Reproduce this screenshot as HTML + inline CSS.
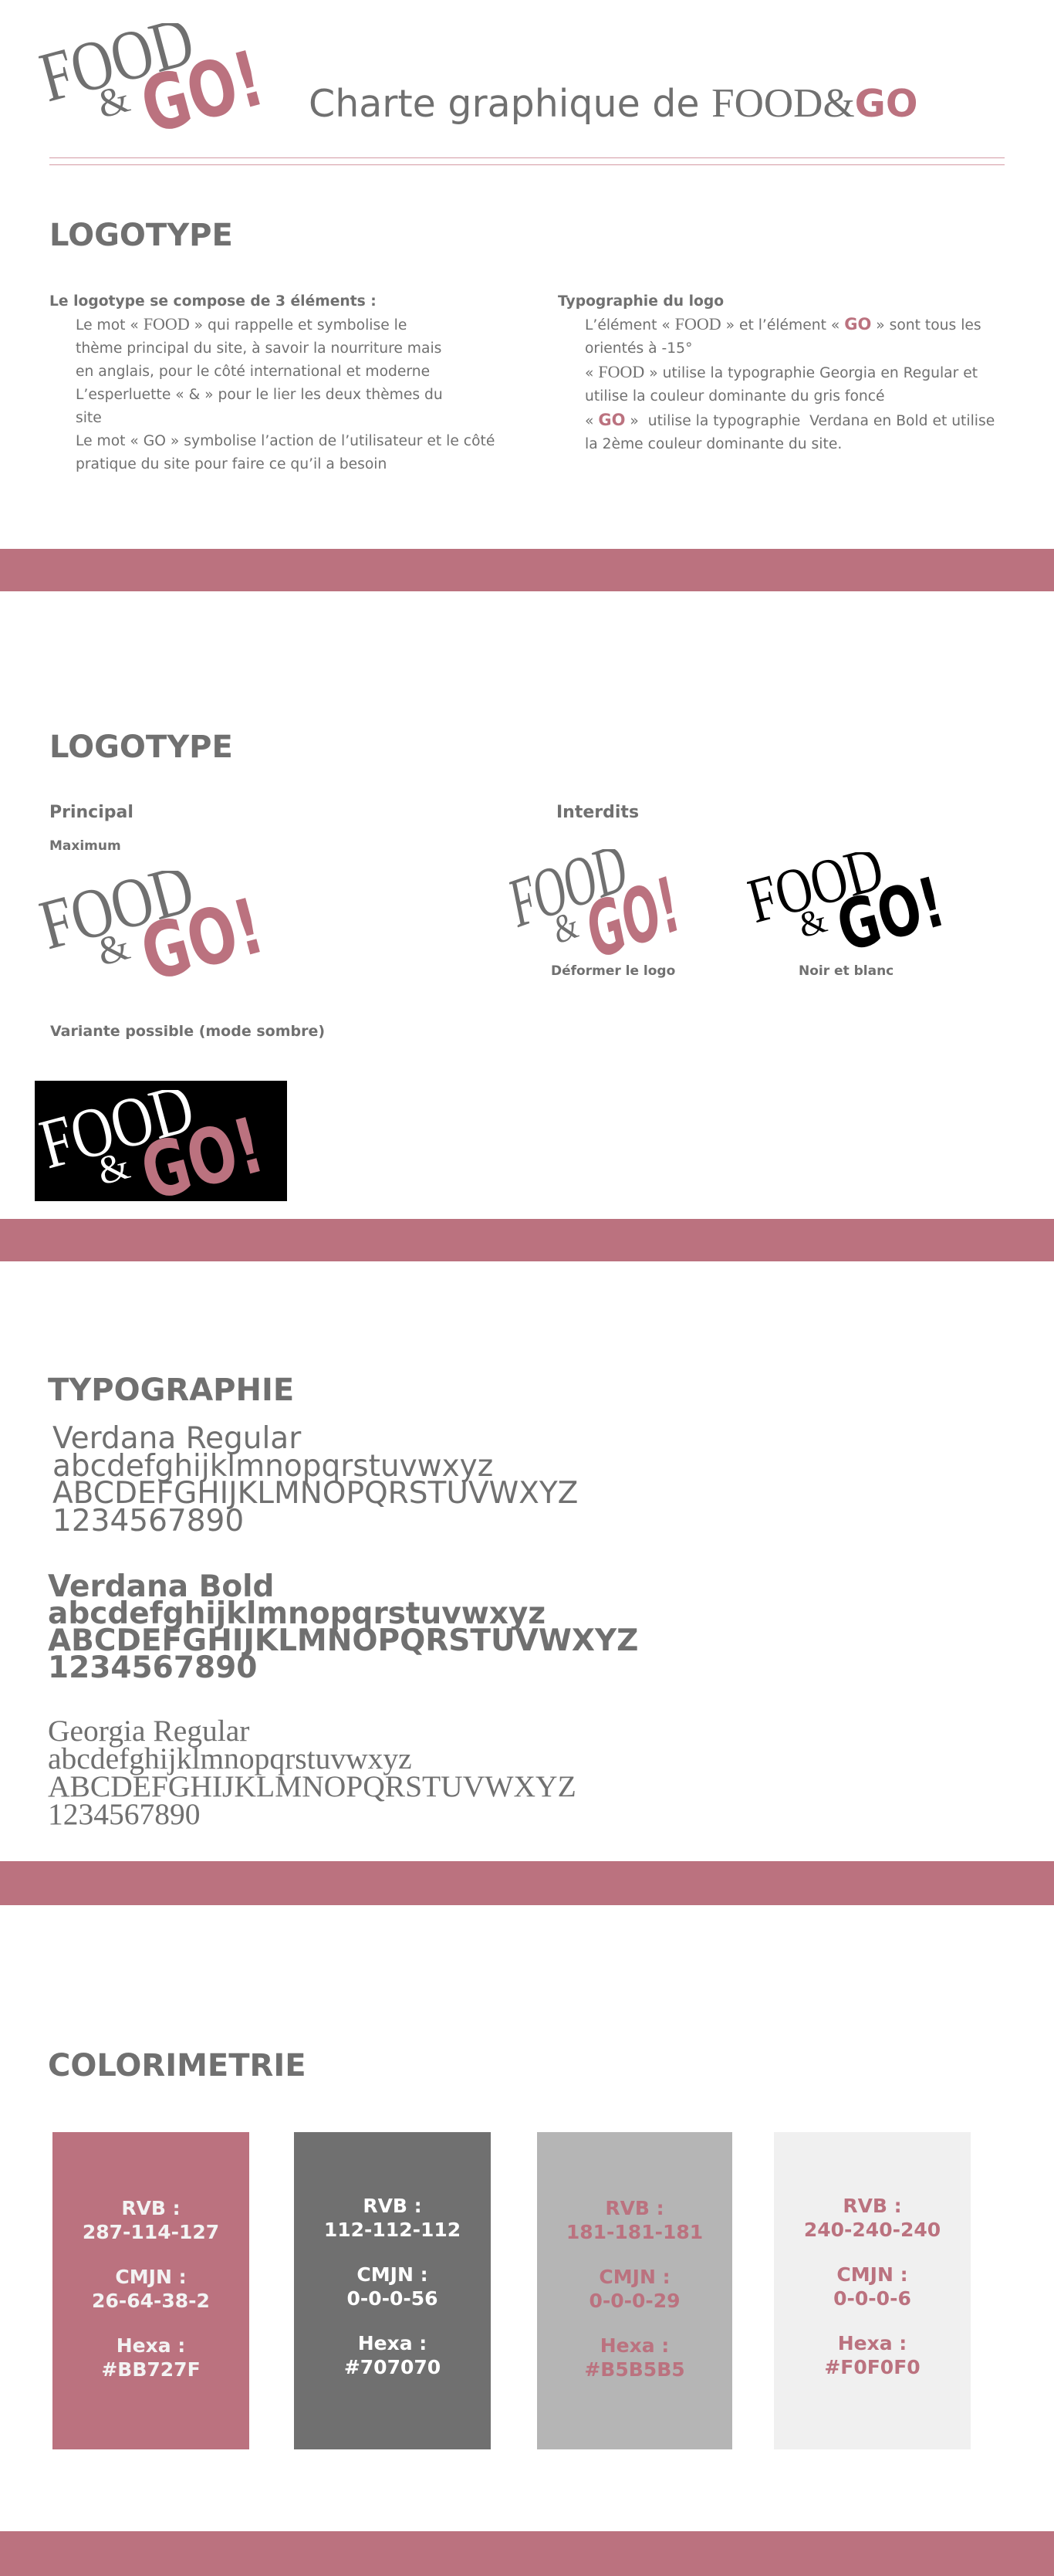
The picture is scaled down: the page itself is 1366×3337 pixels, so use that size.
<!DOCTYPE html>
<html><head><meta charset="utf-8">
<style>
*{margin:0;padding:0;box-sizing:border-box}
body{width:1366px;height:3337px;position:relative;background:#fff;font-family:"DejaVu Sans","Liberation Sans",sans-serif;color:#707070;overflow:hidden}
.a{position:absolute;white-space:nowrap}
.band{position:absolute;left:0;width:1366px;background:#BB727F}
.h{font-weight:bold;font-size:40px;line-height:1}
.t{font-size:18.7px;line-height:30px}
.sf{font-family:"Liberation Serif",serif;font-size:22px}
.go{color:#BB727F;font-weight:bold;font-size:21px}
.box{position:absolute;top:2762px;height:411px;font-weight:bold;font-size:25px;line-height:31px;text-align:center;padding-top:83px}
.box p{margin-bottom:27px}
</style></head><body>

<svg class="a" style="left:50px;top:30px" width="330" height="150" viewBox="0 0 330 150">
<text transform="translate(12 102) rotate(-15) scale(0.9 1.12)" font-family="Liberation Serif,serif" font-size="82" fill="#707070">FOOD</text>
<text x="82" y="123" transform="rotate(-15 82 123)" font-family="Liberation Serif,serif" font-size="52" fill="#707070">&amp;</text>
<text transform="translate(145 143) rotate(-15) scale(0.88 1.18)" font-family="DejaVu Sans,sans-serif" font-weight="bold" font-size="84" fill="#BB727F">GO!</text>
</svg>

<div class="a" style="left:400px;top:104px;font-size:49px;line-height:60px">Charte graphique de <span style="font-family:'Liberation Serif',serif;font-size:53px">FOOD&amp;</span><span style="color:#BB727F;font-weight:bold">GO</span></div>

<div class="a" style="left:64px;top:204px;width:1238px;height:1px;background:#d49aa4"></div>
<div class="a" style="left:64px;top:213px;width:1238px;height:1px;background:#d49aa4"></div>

<div class="a h" style="left:64px;top:285px">LOGOTYPE</div>

<div class="a t" style="left:64px;top:376px;font-weight:bold">Le logotype se compose de 3 éléments :</div>
<div class="a t" style="left:98px;top:405px">
Le mot « <span class="sf">FOOD</span> » qui rappelle et symbolise le<br>
thème principal du site, à savoir la nourriture mais<br>
en anglais, pour le côté international et moderne<br>
L’esperluette « &amp; » pour le lier les deux thèmes du<br>
site<br>
Le mot « GO » symbolise l’action de l’utilisateur et le côté<br>
pratique du site pour faire ce qu’il a besoin</div>

<div class="a t" style="left:723px;top:376px;font-weight:bold">Typographie du logo</div>
<div class="a t" style="left:758px;top:405px">
L’élément « <span class="sf">FOOD</span> » et l’élément « <span class="go">GO</span> » sont tous les<br>
orientés à -15°<br>
« <span class="sf">FOOD</span> » utilise la typographie Georgia en Regular et<br>
utilise la couleur dominante du gris foncé<br>
« <span class="go">GO</span> »&nbsp; utilise la typographie&nbsp; Verdana en Bold et utilise<br>
la 2ème couleur dominante du site.</div>

<div class="band" style="top:711px;height:55px"></div>

<div class="a h" style="left:64px;top:948px">LOGOTYPE</div>
<div class="a" style="left:64px;top:1040px;font-size:22px;font-weight:bold">Principal</div>
<div class="a" style="left:721px;top:1040px;font-size:22px;font-weight:bold">Interdits</div>
<div class="a" style="left:64px;top:1086px;font-size:17px;font-weight:bold">Maximum</div>

<svg class="a" style="left:50px;top:1128px" width="330" height="150" viewBox="0 0 330 150">
<text transform="translate(12 102) rotate(-15) scale(0.9 1.12)" font-family="Liberation Serif,serif" font-size="82" fill="#707070">FOOD</text>
<text x="82" y="123" transform="rotate(-15 82 123)" font-family="Liberation Serif,serif" font-size="52" fill="#707070">&amp;</text>
<text transform="translate(145 143) rotate(-15) scale(0.88 1.18)" font-family="DejaVu Sans,sans-serif" font-weight="bold" font-size="84" fill="#BB727F">GO!</text>
</svg>

<svg class="a" style="left:660px;top:1100px" width="250" height="150" viewBox="0 0 330 150" preserveAspectRatio="none">
<text transform="translate(12 102) rotate(-15) scale(0.9 1.12)" font-family="Liberation Serif,serif" font-size="82" fill="#707070">FOOD</text>
<text x="82" y="123" transform="rotate(-15 82 123)" font-family="Liberation Serif,serif" font-size="52" fill="#707070">&amp;</text>
<text transform="translate(145 143) rotate(-15) scale(0.88 1.18)" font-family="DejaVu Sans,sans-serif" font-weight="bold" font-size="84" fill="#BB727F">GO!</text>
</svg>

<svg class="a" style="left:968px;top:1104px" width="290" height="135" viewBox="0 0 330 150" preserveAspectRatio="none">
<text transform="translate(12 102) rotate(-15) scale(0.9 1.12)" font-family="Liberation Serif,serif" font-size="82" fill="#000">FOOD</text>
<text x="82" y="123" transform="rotate(-15 82 123)" font-family="Liberation Serif,serif" font-size="52" fill="#000">&amp;</text>
<text transform="translate(145 143) rotate(-15) scale(0.88 1.18)" font-family="DejaVu Sans,sans-serif" font-weight="bold" font-size="84" fill="#000">GO!</text>
</svg>

<div class="a" style="left:714px;top:1248px;font-size:17px;font-weight:bold">Déformer le logo</div>
<div class="a" style="left:1035px;top:1248px;font-size:17px;font-weight:bold">Noir et blanc</div>
<div class="a" style="left:65px;top:1325px;font-size:19px;font-weight:bold">Variante possible (mode sombre)</div>

<div class="a" style="left:45px;top:1400px;width:327px;height:156px;background:#000"></div>
<svg class="a" style="left:50px;top:1412px" width="322" height="144" viewBox="0 0 322 144">
<text transform="translate(12 102) rotate(-15) scale(0.9 1.12)" font-family="Liberation Serif,serif" font-size="82" fill="#fff">FOOD</text>
<text x="82" y="123" transform="rotate(-15 82 123)" font-family="Liberation Serif,serif" font-size="52" fill="#fff">&amp;</text>
<text transform="translate(145 143) rotate(-15) scale(0.88 1.18)" font-family="DejaVu Sans,sans-serif" font-weight="bold" font-size="84" fill="#BB727F">GO!</text>
</svg>

<div class="band" style="top:1579px;height:55px"></div>

<div class="a h" style="left:62px;top:1781px">TYPOGRAPHIE</div>
<div class="a" style="left:68px;top:1846px;font-size:39px;line-height:35.5px">Verdana Regular<br>abcdefghijklmnopqrstuvwxyz<br>ABCDEFGHIJKLMNOPQRSTUVWXYZ<br>1234567890</div>
<div class="a" style="left:62px;top:2038px;font-size:39px;line-height:35px;font-weight:bold">Verdana Bold<br>abcdefghijklmnopqrstuvwxyz<br>ABCDEFGHIJKLMNOPQRSTUVWXYZ<br>1234567890</div>
<div class="a" style="left:62px;top:2224px;font-size:39.5px;line-height:36px;font-family:'Liberation Serif',serif">Georgia Regular<br>abcdefghijklmnopqrstuvwxyz<br>ABCDEFGHIJKLMNOPQRSTUVWXYZ<br>1234567890</div>

<div class="band" style="top:2411px;height:57px"></div>

<div class="a h" style="left:62px;top:2656px">COLORIMETRIE</div>

<div class="box" style="left:68px;width:255px;background:#BB727F;color:#f3f3f3"><p>RVB :<br>287-114-127</p><p>CMJN :<br>26-64-38-2</p><p>Hexa :<br>#BB727F</p></div>
<div class="box" style="left:381px;width:255px;background:#707070;color:#fff;padding-top:80px"><p>RVB :<br>112-112-112</p><p>CMJN :<br>0-0-0-56</p><p>Hexa :<br>#707070</p></div>
<div class="box" style="left:696px;width:253px;background:#B5B5B5;color:#BB727F"><p>RVB :<br>181-181-181</p><p>CMJN :<br>0-0-0-29</p><p>Hexa :<br>#B5B5B5</p></div>
<div class="box" style="left:1003px;width:255px;background:#F0F0F0;color:#BB727F;padding-top:80px"><p>RVB :<br>240-240-240</p><p>CMJN :<br>0-0-0-6</p><p>Hexa :<br>#F0F0F0</p></div>

<div class="band" style="top:3279px;height:58px"></div>
</body></html>
